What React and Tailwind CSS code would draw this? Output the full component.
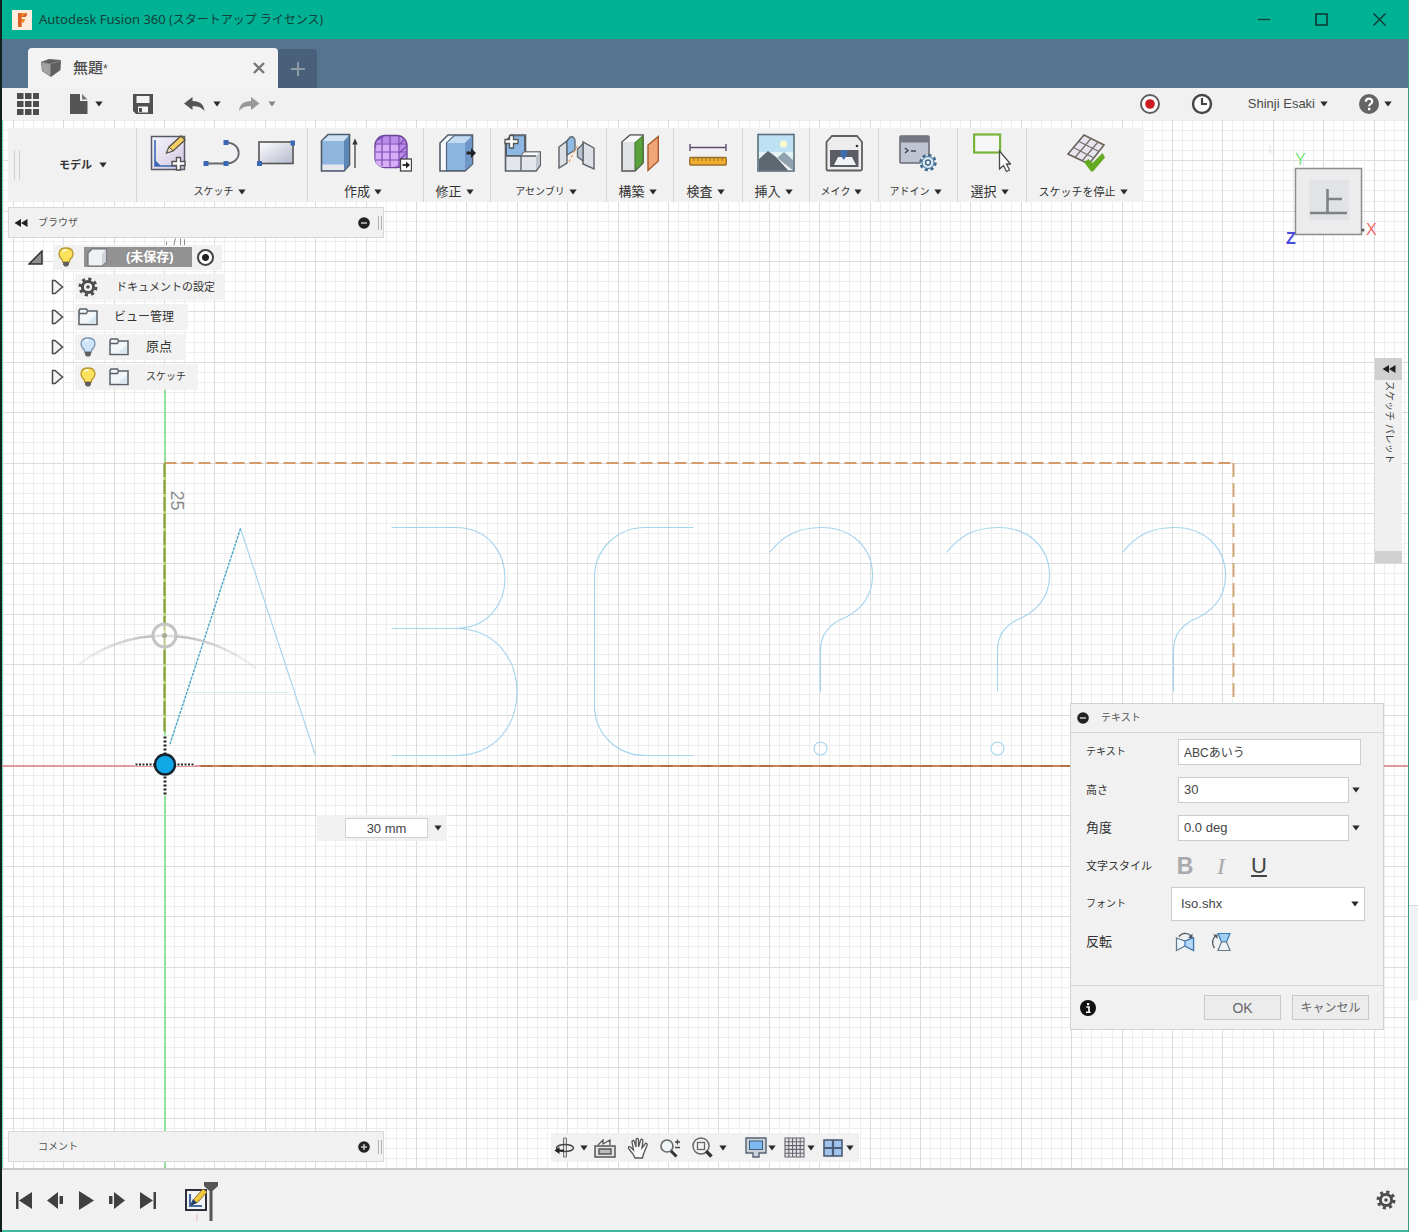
import React from "react";

const GRID = 50.4;
const range = (from, to) => Array.from({ length: to - from + 1 }, (_, i) => from + i);

function Caret({ className = "fill-[#2b2b2b]" }) {
  return (
    <svg className={"h-[6px] w-[8px] shrink-0 " + className} viewBox="0 0 8 6" aria-hidden="true">
      <path d="M0.3 0.4H7.7L4 5.6Z" />
    </svg>
  );
}

function Icon({ w = 24, h = 24, className = "h-6 w-6", children }) {
  return (
    <svg className={"shrink-0 " + className} viewBox={`0 0 ${w} ${h}`} fill="none" aria-hidden="true">
      {children}
    </svg>
  );
}

function Big({ children }) {
  return (
    <Icon w={38} h={40} className="h-[40px] w-[38px]">
      {children}
    </Icon>
  );
}

function TitleBar() {
  return (
    <header className="flex h-[39px] shrink-0 items-center bg-[#00b294] pl-[10px] text-[#12403a]">
      <Icon w={20} h={20} className="h-5 w-5">
        <rect width="20" height="20" fill="#fdeee0" />
        <path d="M6 3H15L13.5 7H9.5V9H13L12 12.5H9.5V17H6Z" fill="#f08a24" />
        <path d="M6 3H9.5V17H6Z" fill="#d8622a" />
        <path d="M9.5 7L15 3V5L13.5 7Z" fill="#e2572b" />
      </Icon>
      <h1 className="ml-[7px] whitespace-pre text-[13px] leading-5">
        Autodesk Fusion 360 <span className="text-[12px]">(スタートアップ ライセンス)</span>
      </h1>
      <div className="ml-auto flex">
        <button aria-label="最小化" className="flex h-[38px] w-[57px] items-center justify-center">
          <Icon w={13} h={13} className="h-[13px] w-[13px]"><path d="M0 6.5H12" stroke="#134b42" strokeWidth="1.4" /></Icon>
        </button>
        <button aria-label="最大化" className="flex h-[38px] w-[57px] items-center justify-center">
          <Icon w={13} h={13} className="h-[13px] w-[13px]"><path d="M1 1H12V12H1Z" stroke="#0c3630" strokeWidth="1.6" /></Icon>
        </button>
        <button aria-label="閉じる" className="flex h-[38px] w-[58px] items-center justify-center">
          <Icon w={13} h={13} className="h-[13px] w-[13px]"><path d="M0.5 0.5L12.5 12.5M12.5 0.5L0.5 12.5" stroke="#0c3630" strokeWidth="1.4" /></Icon>
        </button>
      </div>
    </header>
  );
}

function TabBar() {
  return (
    <div className="flex h-[49px] shrink-0 items-end bg-[#56738f] pl-[26px]">
      <div className="flex h-[40px] w-[250px] items-center rounded-t-[4px] bg-[#f3f3f3] pl-[12px] pr-[9px]">
        <Icon w={22} h={20} className="h-5 w-[22px]">
          <path d="M1 4L9 1L21 2L20.500 12L11 19L2 13Z" fill="#606060" />
          <path d="M1.500 4.500L10.500 6V18L2.500 13Z" fill="#a2a2a2" />
          <path d="M1.500 4L10.500 6L21 2.500" stroke="#848484" />
        </Icon>
        <span className="ml-[11px] text-[15px] font-medium leading-5 text-[#4c4c4c]">無題<span className="text-[12px]">*</span></span>
        <button aria-label="タブを閉じる" className="ml-auto flex h-5 w-5 items-center justify-center">
          <Icon w={12} h={12} className="h-3 w-3"><path d="M1 1L11 11M11 1L1 11" stroke="#777" strokeWidth="2.400" /></Icon>
        </button>
      </div>
      <button aria-label="新しいタブ" className="flex h-[39px] w-[39px] items-center justify-center rounded-t-[4px] bg-[#48607a]">
        <Icon w={14} h={14} className="h-[14px] w-[14px]"><path d="M7 0V14M0 7H14" stroke="#8f99a3" strokeWidth="2" /></Icon>
      </button>
    </div>
  );
}

function QuickBar() {
  return (
    <div className="flex h-[32px] shrink-0 items-center bg-[#f1f1f1] pl-[15px] pr-[16px]">
      <button aria-label="データ パネル">
        <Icon w={22} h={22} className="h-[22px] w-[22px]">
          {[0, 8, 16].map((x) => [0, 8, 16].map((y) => <rect key={x + "-" + y} x={x} y={y} width="6.500" height="6" fill="#4d4d4d" />))}
        </Icon>
      </button>
      <button aria-label="ファイル" className="ml-[31px] flex items-center gap-[7px]">
        <Icon w={18} h={20} className="h-5 w-[18px]">
          <path d="M0 0H10V7H17.500V20H0Z" fill="#555" />
          <path d="M12 0L17.500 5.500H12Z" fill="#777" />
        </Icon>
        <Caret />
      </button>
      <button aria-label="保存" className="ml-[30px]">
        <Icon w={20} h={20} className="h-5 w-5">
          <path d="M0 0H20V20H3L0 17Z" fill="#505050" />
          <rect x="3.500" y="2" width="13" height="7" fill="#f3f3f3" />
          <rect x="5" y="12.500" width="10" height="6" fill="#f3f3f3" />
          <rect x="6" y="14" width="3" height="4" fill="#505050" />
        </Icon>
      </button>
      <button aria-label="元に戻す" className="ml-[31px] flex items-center gap-[8px]">
        <Icon w={21} h={15} className="h-[15px] w-[21px]">
          <path d="M0 6.500L8.500 0V4C16 4 20 7.500 20.500 14C17 10 14 9 8.500 9.200V13Z" fill="#555" />
        </Icon>
        <Caret />
      </button>
      <button aria-label="やり直し" className="ml-[18px] flex items-center gap-[8px]">
        <Icon w={21} h={15} className="h-[15px] w-[21px]">
          <path d="M20.500 6.500L12 0V4C4.500 4 0.500 7.500 0 14C3.500 10 6.500 9 12 9.200V13Z" fill="#999" />
        </Icon>
        <Caret className="fill-[#888]" />
      </button>
      <div className="ml-auto flex items-center">
        <button aria-label="記録">
          <Icon w={22} h={22} className="h-[22px] w-[22px]">
            <circle cx="11" cy="11" r="9" stroke="#5f5f5f" strokeWidth="2" fill="#fff" />
            <circle cx="11" cy="11" r="4.800" fill="#cc1c20" />
          </Icon>
        </button>
        <button aria-label="ジョブ ステータス" className="ml-[30px]">
          <Icon w={22} h={22} className="h-[22px] w-[22px]">
            <circle cx="11" cy="11" r="9" stroke="#454545" strokeWidth="2.400" fill="#fff" />
            <path d="M11 5V11H16" stroke="#454545" strokeWidth="2.200" />
          </Icon>
        </button>
        <button className="ml-[35px] flex items-center gap-[5px] text-[13px] leading-4 text-[#4a4a4a]">Shinji Esaki<Caret /></button>
        <button aria-label="ヘルプ" className="ml-[31px] flex items-center gap-[5px]">
          <Icon w={20} h={20} className="h-5 w-5">
            <circle cx="10" cy="10" r="10" fill="#646464" />
            <path d="M6.800 7.800C6.800 3.600 13.300 3.700 13.200 7.700C13.100 9.700 10.200 9.900 10.200 12.200" stroke="#fff" strokeWidth="2.200" />
            <rect x="9" y="13.800" width="2.400" height="2.400" fill="#fff" />
          </Icon>
          <Caret />
        </button>
      </div>
    </div>
  );
}

const SketchIcon = () => (
  <Big>
    <rect x="2.500" y="3.500" width="33" height="33" fill="url(#lilac)" stroke="#555b66" strokeWidth="1.500" />
    <path d="M6 7V33H32" stroke="#3b6bb3" strokeWidth="1.600" />
    <path d="M6 27V33H12Z" fill="#3b6bb3" />
    <path d="M17.500 20L20 14L32 3L36 7L24 18Z" fill="#f5cf63" stroke="#5b5348" strokeWidth="1.300" />
    <path d="M17.500 20L20 14L24 18Z" fill="#eee0c0" stroke="#5b5348" />
    <path d="M27.500 24.500H31.500V28.500H36V32.500H31.500V37H27.500V32.500H23V28.500H27.500Z" fill="#fff" stroke="#555" strokeWidth="1.400" />
  </Big>
);
const LineIcon = () => (
  <Big>
    <path d="M3 30.500H23C40 30.500 40 9.500 23 9.500" stroke="#66696f" strokeWidth="1.800" />
    <path d="M0.500 28H5.500V33H0.500ZM20.500 28H25.500V33H20.500ZM20.500 7H25.500V12H20.500Z" fill="#3c68b8" />
  </Big>
);
const RectIcon = () => (
  <Big>
    <rect x="2" y="9" width="34" height="21.500" fill="url(#steel)" stroke="#555" strokeWidth="1.600" />
    <path d="M33.500 7.500H38V12.500H33.500ZM0 28H5V33H0Z" fill="#3c68b8" />
  </Big>
);
const ExtrudeIcon = () => (
  <Big>
    <path d="M1.500 8L8 1.500H29.500V32L24 38H1.500Z" fill="#8fb6df" stroke="#4f5b69" strokeWidth="1.600" />
    <path d="M2.500 8L8.500 2.500H28.500L24 8Z" fill="#cfe2f4" />
    <path d="M24 8L29 3V31.500L24 37Z" fill="#5e87b6" />
    <path d="M2.500 31.500H24V37H2.500Z" fill="#e5e8ec" />
    <path d="M35 9V35" stroke="#333" strokeWidth="1.200" />
    <path d="M32.300 11.500L35 5.500L37.700 11.500Z" fill="#333" />
  </Big>
);
const FormIcon = () => (
  <Big>
    <rect x="1" y="2.500" width="32" height="32" rx="10" fill="#bb8ce9" stroke="#6d4597" strokeWidth="1.400" />
    <rect x="1.500" y="10" width="24" height="24" rx="7" fill="#d6adf7" />
    <path d="M8 4V33M16 2.500V34.500M25 3V34M1 11H33M1 19H33M2 27H32M4 7L10 3M25 12L31 6M25 20L33 13M25 27L33 20" stroke="#7d4cb0" strokeWidth="1.200" />
    <rect x="26.500" y="26" width="11" height="12" fill="#fff" stroke="#444" strokeWidth="1.300" />
    <path d="M28.500 32H33" stroke="#222" strokeWidth="1.800" /><path d="M32 28.500L36 32L32 35.500Z" fill="#222" />
  </Big>
);
const PressPullIcon = () => (
  <Big>
    <path d="M2 10L10 2H34.500V31L27 38H2Z" fill="#f5f8fb" stroke="#555e69" strokeWidth="1.600" />
    <path d="M8.500 10L16 2.800H34V31L27 37.500H8.500Z" fill="#8db5e2" stroke="#50647c" strokeWidth="1.200" />
    <path d="M9 10L16.500 3.300H33L27 10Z" fill="#c3daf1" />
    <path d="M27 10L34 3.500V31L27 37Z" fill="#6f97c6" />
    <path d="M28.500 18.500H33V15L38 20L33 25V21.500H28.500Z" fill="#222" />
  </Big>
);
const ComponentIcon = () => (
  <Big>
    <path d="M2.500 9L8 2H22.500V19H37.500V32L33 38H2.500Z" fill="#e3e6ea" stroke="#565d66" strokeWidth="1.600" />
    <path d="M3.500 9.500L8.500 2.800H21.500V18L18 22.500H3.500Z" fill="#8db8e4" stroke="#565d66" />
    <path d="M18.500 23L22.500 19.500H37L33 23Z" fill="#fafafa" />
    <path d="M3 23H18V37.500M18 23H33" stroke="#565d66" strokeWidth="1.300" />
    <path d="M33 23L37 19.500V32L33 37Z" fill="#bfc5cc" />
    <path d="M6.500 2.500H10.500V6.500H15V10.500H10.500V15H6.500V10.500H2V6.500H6.500Z" fill="#fff" stroke="#555" strokeWidth="1.300" />
  </Big>
);
const JointIcon = () => (
  <Big>
    <path d="M2 14L10 8V30L2 35Z" fill="#dcdfe3" stroke="#5d6269" strokeWidth="1.400" />
    <path d="M10 8L13 4C16 3 18 5 18 8V17L10 22Z" fill="#8dbce6" stroke="#5d6269" strokeWidth="1.300" />
    <path d="M37 15L26 9V31L37 36Z" fill="#dcdfe3" stroke="#5d6269" strokeWidth="1.400" />
    <path d="M26 11L20.500 16V24L26 28Z" fill="#b9c3cf" stroke="#5d6269" strokeWidth="1.300" />
    <path d="M12 29L20 13" stroke="#ef9d55" strokeWidth="1.200" strokeDasharray="3 2" />
  </Big>
);
const PlaneIcon = () => (
  <Big>
    <path d="M1 9L9 2H22V30L14 38H1Z" fill="#dfe2e5" stroke="#555" strokeWidth="1.500" />
    <path d="M14 9L22 2.500V30L14 37.500Z" fill="#58a13c" stroke="#3d6b2d" />
    <path d="M2 9L9.500 2.800H21L14 9Z" fill="#fafafa" />
    <path d="M27 12L37.300 3.500V28L27 37.500Z" fill="#f2a578" stroke="#a75a2d" strokeWidth="1.400" />
  </Big>
);
const MeasureIcon = () => (
  <Big>
    <path d="M1 14.500H37M1 11V18M37 11V18" stroke="#5d4a70" strokeWidth="1.400" />
    <rect x="0.700" y="24.500" width="36.600" height="7.500" rx="1" fill="#f1ae2c" stroke="#96702c" strokeWidth="1.300" />
    <path d="M5 25V28M9 25V28M13 25V28M17 25V28M21 25V28M25 25V28M29 25V28M33 25V28" stroke="#96702c" />
  </Big>
);
const ImageIcon = () => (
  <Big>
    <rect x="1" y="1.500" width="36" height="36.500" fill="#bfe1f4" stroke="#5d6e7a" strokeWidth="1.600" />
    <rect x="2" y="19" width="34" height="8" fill="#e3f3f6" />
    <circle cx="26.500" cy="11" r="3.500" fill="#fffbd0" />
    <path d="M20 25L27 19L36 27V37H26Z" fill="#8fa2ad" />
    <path d="M2 26L11 18L19 24L32 37.200H2Z" fill="#5e6670" />
    <path d="M19 24L36 37.200H31Z" fill="#eef0f1" />
  </Big>
);
const MakeIcon = () => (
  <Big>
    <path d="M1.500 9L7 3H32L37 9V36Q37 37.500 35.500 37.500H3Q1.500 37.500 1.500 36Z" fill="#ededed" stroke="#606060" strokeWidth="1.800" />
    <rect x="5" y="17" width="28.500" height="17" fill="#5a5e64" />
    <path d="M9 32L13 24H27L31 32Z" fill="#f0f2f5" />
    <path d="M15.500 17H22V22L18.750 27L15.500 22Z" fill="#3c6eae" />
    <circle cx="32" cy="13" r="1.300" fill="#333" />
  </Big>
);
const AddInIcon = () => (
  <Big>
    <rect x="1" y="3" width="29" height="27" rx="1" fill="#c0c5d2" stroke="#6a6c76" strokeWidth="1.600" />
    <rect x="1" y="3" width="29" height="6.500" fill="#747782" />
    <path d="M6 15L9 17.500L6 20M12 18H17" stroke="#43444b" strokeWidth="1.400" />
    <circle cx="29" cy="29.500" r="7.500" fill="#dbeaf6" stroke="#41698e" strokeWidth="2.500" strokeDasharray="3.200 2.690" />
    <circle cx="29" cy="29.500" r="6" fill="#dbeaf6" stroke="#41698e" />
    <circle cx="29" cy="29.500" r="2.400" fill="#fff" stroke="#41698e" strokeWidth="1.500" />
  </Big>
);
const SelectIcon = () => (
  <Big>
    <rect x="1.100" y="1.500" width="26" height="18" fill="#f7f7f7" stroke="#77b53a" strokeWidth="2.200" />
    <path d="M26.500 18V36L30.500 32.500L33.500 38.500L36.500 37L33.500 31H37.500Z" fill="#fff" stroke="#4b4b4b" strokeWidth="1.300" />
  </Big>
);
const StopSketchIcon = () => (
  <Big>
    <path d="M17 2L37 12L22 31L1 21Z" fill="#e7e6f0" stroke="#6b6259" strokeWidth="1.600" />
    <path d="M12 8.500L32 18.500M6.500 14.500L27 25M24 5.500L8 24.500M31 9L15 28" stroke="#77706d" strokeWidth="1.300" />
    <path d="M17 29L21.500 26L25.500 30L35.500 20L38 24.500L26 38.500H24Z" fill="#64aa22" />
  </Big>
);

const GROUPS = [
  { label: "スケッチ", size: "text-[10px]", width: "w-[171px]", icons: [SketchIcon, LineIcon, RectIcon] },
  { label: "作成", size: "text-[13px]", width: "w-[116px]", icons: [ExtrudeIcon, FormIcon] },
  { label: "修正", size: "text-[13px]", width: "w-[67px]", icons: [PressPullIcon] },
  { label: "アセンブリ", size: "text-[10px]", width: "w-[116px]", icons: [ComponentIcon, JointIcon] },
  { label: "構築", size: "text-[13px]", width: "w-[67px]", icons: [PlaneIcon] },
  { label: "検査", size: "text-[13px]", width: "w-[69px]", icons: [MeasureIcon] },
  { label: "挿入", size: "text-[13px]", width: "w-[67px]", icons: [ImageIcon] },
  { label: "メイク", size: "text-[10px]", width: "w-[69px]", icons: [MakeIcon] },
  { label: "アドイン", size: "text-[10px]", width: "w-[79px]", icons: [AddInIcon] },
  { label: "選択", size: "text-[13px]", width: "w-[69px]", icons: [SelectIcon] },
  { label: "スケッチを停止", size: "text-[11px]", width: "w-[118px]", icons: [StopSketchIcon] },
];

function Ribbon() {
  return (
    <nav aria-label="ツールバー" className="relative ml-[6px] mt-2 flex h-[74px] w-fit bg-[#f1f1f1]">
      <div className="flex w-[128px] items-center">
        <span className="ml-[6px] h-[30px] w-[6px] border-x border-[#cfcfcf]" />
        <button className="ml-[39px] flex items-center gap-[7px] text-[11px] font-bold leading-4 text-[#333]">モデル<Caret /></button>
      </div>
      {GROUPS.map((g) => (
        <div key={g.label} className={"flex flex-col items-center border-l border-[#d6d6d6] pt-[5px] " + g.width}>
          <div className="flex gap-4">
            {g.icons.map((I, i) => (
              <button key={i} aria-label={g.label + " " + (i + 1)}><I /></button>
            ))}
          </div>
          <button className={"mt-[11px] flex items-center gap-[4px] pr-[5px] leading-4 text-[#333] " + g.size}>{g.label}<Caret /></button>
        </div>
      ))}
    </nav>
  );
}

function RoundMark({ plus }) {
  return (
    <Icon w={12} h={12} className="h-3 w-3">
      <circle cx="6" cy="6" r="5.800" fill="#222" />
      <path d={plus ? "M3 6H9M6 3V9" : "M3 6H9"} stroke="#c8c8c8" strokeWidth="1.500" />
    </Icon>
  );
}

function PanelBar({ title, plus }) {
  return (
    <div className="flex h-[31px] w-[376px] items-center border border-[#d8d8d8] bg-[#f1f1f1] pr-[1px]">
      <span className="flex w-[29px] pl-[5px]">
        {!plus && <Icon w={14} h={8} className="h-2 w-[14px]"><path d="M7 0V8L0.500 4ZM13.500 0V8L7 4Z" fill="#222" /></Icon>}
      </span>
      <h2 className="text-[10px] leading-4 text-[#555]">{title}</h2>
      <button aria-label={title + (plus ? "を展開" : "を閉じる")} className="ml-auto"><RoundMark plus={plus} /></button>
      <span className="ml-[8px] h-[14px] w-[4px] border-x border-[#b0b0b0]" />
    </div>
  );
}

const Bulb = ({ on }) => (
  <Icon w={16} h={20} className="h-5 w-4">
    <path d="M8 1C-0.500 1 -0.500 9 4.500 13V15H11.500V13C16.500 9 16.500 1 8 1Z" fill={on ? "#fbe25c" : "#cfe4f8"} stroke={on ? "#b8962e" : "#7895b5"} strokeWidth="1.300" />
    <path d="M5 4.500C6 3 7.500 3 8.500 3.200" stroke="#fff" strokeWidth="1.500" />
    <path d="M5 15H11V17.500L9.500 19.500H6.500L5 17.500Z" fill="#606060" />
  </Icon>
);
const Folder = () => (
  <Icon w={20} h={18} className="h-[18px] w-5">
    <path d="M1 2.500L2 1H8.500L9.500 3H19V16.500H1Z" fill="#f3f6f9" stroke="#596069" strokeWidth="1.500" />
    <path d="M1 5.500H8.500L9.500 3" stroke="#596069" strokeWidth="1.300" />
    <path d="M10 14L18 7V15.500H10Z" fill="#d9e8f1" />
  </Icon>
);
const Gear = ({ className = "h-5 w-5" }) => (
  <Icon w={20} h={20} className={className}>
    <circle cx="10" cy="10" r="8" stroke="#4d4d4d" strokeWidth="3" strokeDasharray="3.140 3.140" />
    <circle cx="10" cy="10" r="5.600" stroke="#4d4d4d" strokeWidth="3" />
    <circle cx="10" cy="10" r="1.800" fill="#4d4d4d" />
  </Icon>
);
const Expand = () => (
  <Icon w={13} h={16} className="h-4 w-[13px]"><path d="M1.500 1.500H4L11.500 8L4 14.500H1.500Z" fill="#f3f3f3" stroke="#4a4a4a" strokeWidth="1.500" /></Icon>
);

const ROWS = [
  { label: "ドキュメントの設定", size: "text-[11px]", icons: [<Gear key="g" />], gap: "ml-[18px]", pad: "pr-[10px]" },
  { label: "ビュー管理", size: "text-[12px]", icons: [<Folder key="f" />], gap: "ml-[16px]", pad: "pr-[14px]" },
  { label: "原点", size: "text-[13px]", icons: [<Bulb key="b" />, <Folder key="f" />], gap: "ml-[17px]", pad: "pr-[14px]" },
  { label: "スケッチ", size: "text-[10px]", icons: [<Bulb key="b" on />, <Folder key="f" />], gap: "ml-[17px]", pad: "pr-[12px]" },
];

function Browser() {
  return (
    <aside className="relative ml-[6px] mt-[5px] w-fit">
      <PanelBar title="ブラウザ" />
      <ul className="mt-[4px] text-[#333]">
        <li className="flex h-[30px] items-center pl-[20px]">
          <button aria-label="折りたたむ"><Icon w={15} h={15} className="h-[15px] w-[15px]"><path d="M1 14L14 1V14Z" fill="#8f8f8f" stroke="#333" strokeWidth="1.500" /></Icon></button>
          <div className="ml-[10px] flex h-[25px] items-center bg-[#f1f1f1] pl-[5px] pr-[8px]">
            <Bulb on />
            <div className="ml-[10px] flex h-[20px] w-[108px] items-center bg-[#929292] pl-[3px]">
              <Icon w={20} h={19} className="h-[19px] w-5">
                <path d="M1 5L5 1H19V14L15 18H1Z" fill="#f0f1f3" stroke="#6a6e74" strokeWidth="1.200" />
                <path d="M15 5.500V17.500L19 14V1.500Z" fill="#cfd4da" />
              </Icon>
              <span className="ml-[19px] text-[13px] font-bold leading-4 text-white">(未保存)</span>
            </div>
            <input type="radio" name="active" defaultChecked aria-label="(未保存) をアクティブにする" className="ml-[5px] h-[17px] w-[17px] appearance-none rounded-full border-2 border-[#444] bg-[radial-gradient(circle,#222_3px,#fff_4px)]" />
          </div>
        </li>
        {ROWS.map((r) => (
          <li key={r.label} className="flex h-[30px] items-center pl-[43px]">
            <button aria-label={r.label + "を展開"}><Expand /></button>
            <div className={"ml-[11px] flex h-[26px] items-center bg-[#f1f1f1]/90 pl-[3px] " + r.pad}>
              <div className="flex items-center gap-[13px]">
                {r.icons.map((icon, i) => (
                  <span key={i} className={r.icons.length > 1 && i === 0 ? "pl-[2px]" : ""}>{icon}</span>
                ))}
              </div>
              <span className={"leading-4 " + r.gap + " " + r.size}>{r.label}</span>
            </div>
          </li>
        ))}
      </ul>
    </aside>
  );
}

function SketchCanvas() {
  return (
    <svg className="absolute inset-0 h-full w-full" fill="none" aria-hidden="true">
      <defs>
        <linearGradient id="lilac" x1="0" y1="0" x2="1" y2="1"><stop offset="0" stopColor="#f4f6fb" /><stop offset="1" stopColor="#d3c6e2" /></linearGradient>
        <linearGradient id="steel" x1="0" y1="0" x2="1" y2="1"><stop offset="0" stopColor="#ffffff" /><stop offset="1" stopColor="#b4b9cc" /></linearGradient>
        <linearGradient id="fade"><stop offset="0" stopColor="#c8c8c8" stopOpacity="0.200" /><stop offset="0.400" stopColor="#c0c0c0" /><stop offset="0.600" stopColor="#c0c0c0" /><stop offset="1" stopColor="#c8c8c8" stopOpacity="0.200" /></linearGradient>
      </defs>
      <g transform="translate(162.500 645.500)">
        <g shapeRendering="crispEdges">
          {range(-17, 200).map((i) => i % 5 !== 0 && <path key={"a" + i} d={`M${(i * GRID) / 5} -700V700`} stroke="#eeeeef" />)}
          {range(-70, 60).map((i) => i % 5 !== 0 && <path key={"b" + i} d={`M-200 ${(i * GRID) / 5}H2000`} stroke="#eeeeef" />)}
          {range(-3, 39).map((i) => <path key={"c" + i} d={`M${i * GRID} -700V700`} stroke="#dadcdd" />)}
          {range(-13, 11).map((i) => <path key={"d" + i} d={`M-200 ${i * GRID}H2000`} stroke="#dadcdd" />)}
          <path d="M-162 -700V700" stroke="#7ddcc4" />
          <path d="M-200 0H2000" stroke="#e39a9a" strokeWidth="2" />
          <path d="M0 -378V700" stroke="#92e29b" strokeWidth="2" />
        </g>
        <path d="M0 -302.400H1069" stroke="#d59a69" strokeWidth="2" strokeDasharray="12 5" />
        <path d="M1069 -302.400V0" stroke="#d5a577" strokeWidth="2" strokeDasharray="14 6" />
        <path d="M0 -302.400V-34" stroke="#b9cf6e" strokeWidth="2" />
        <path d="M0 -302.400V-34" stroke="#8c9f3c" strokeWidth="2" strokeDasharray="14 3" />
        <path d="M36 0.500H1069" stroke="#c98553" strokeWidth="2" />
        <path d="M36 0.500H1069" stroke="#b36f3f" strokeWidth="2" strokeDasharray="12 8" />
        <text transform="translate(6 -275) rotate(90)" fontSize="18" fill="#8c8c8c" fontFamily="Liberation Sans">25</text>
        <path d="M2 -524V-519M11 -527L9 -519M16 -527V-519M20 -526V-520" stroke="#8a8a8a" />
        <g stroke="#a3d4ec" strokeWidth="1.100">
          <path d="M76 -237L151 -10" />
          <path d="M22 -73H125" stroke="#d9eef2" />
          <path d="M227 -238H291C357 -238 357 -137 291 -137M227 -137H291C373 -137 373 -10 291 -10H227" />
          <path d="M529 -238H481C452 -238 430 -216 430 -188V-60C430 -32 452 -10 481 -10H529" />
          {[0, 177, 353].map((x) => (
            <g key={x} transform={`translate(${x} 0)`}>
              <path d="M605 -213C618 -229 632 -238 657 -238C687 -238 708 -218 708 -190C708 -171 698 -157 681 -148C665 -142 656 -132 656 -115V-74" />
              <circle cx="656" cy="-17" r="6.500" />
            </g>
          ))}
        </g>
        <path d="M76 -237L5 -20" stroke="#4ba6c6" strokeWidth="1.400" strokeDasharray="3 1" />
        <path d="M-86 -101C-34 -140 36 -140 92 -97" stroke="url(#fade)" strokeWidth="2.500" />
        <circle cy="-130" r="11.500" stroke="#c4c4c4" strokeWidth="3" fill="#fff" fillOpacity="0.500" />
        <circle cy="-130" r="2.500" fill="#a9ad98" />
        <path d="M-30 -1H30M0 -30V30" stroke="#fff" strokeWidth="3" />
        <path d="M-29 -1H29" stroke="#222" strokeWidth="2" strokeDasharray="2 1.500" />
        <path d="M0.500 -29V29" stroke="#222" strokeWidth="3" strokeDasharray="2 2" />
        <circle cx="0.500" cy="-1" r="10" fill="#12a8e8" stroke="#14222c" strokeWidth="2.400" />
      </g>
    </svg>
  );
}

function ViewCube() {
  return (
    <div className="absolute right-[30px] top-[14px] h-[128px] w-[120px]">
      <svg className="h-full w-full" viewBox="0 0 120 128" fill="none" fontFamily="Liberation Sans" role="img" aria-label="ビュー: 上">
        <path d="M12 11V18H17" stroke="#e0e0e0" />
        <text x="37" y="31" fontSize="16" fill="#7be580">Y</text>
        <rect x="37.500" y="34.500" width="66" height="66" fill="#ececed" stroke="#8d8d8d" strokeWidth="1.500" />
        <rect x="51" y="46" width="40" height="40" fill="#e2e3e6" />
        <path d="M69.500 55V79M69.500 65H84M52 79H89" stroke="#7d8287" strokeWidth="2.600" />
        <text x="28" y="110" fontSize="16" fontWeight="bold" fill="#4b49dc">Z</text>
        <circle cx="105" cy="96" r="1.500" fill="#555" />
        <text x="108" y="101" fontSize="16" fill="#ef6b6b">X</text>
      </svg>
    </div>
  );
}

function Palette() {
  return (
    <aside className="absolute right-[6px] top-[238px] flex h-[205px] w-[27px] flex-col items-center bg-[#f0f0f0]">
      <button aria-label="パレットを開く" className="flex h-[22px] w-full shrink-0 items-center justify-center bg-[#d0d0d0]">
        <Icon w={14} h={8} className="h-2 w-[14px]"><path d="M7 0V8L0.500 4ZM13.500 0V8L7 4Z" fill="#222" /></Icon>
      </button>
      <span className="mt-px text-[10px] leading-4 text-[#444] [text-orientation:sideways] [writing-mode:vertical-rl]">スケッチ パレット</span>
      <span className="mt-auto h-3 w-full bg-[#d0d0d0]" />
    </aside>
  );
}

const field = "h-[26px] border border-[#cccccc] bg-white px-[5px] pb-px text-[#444] outline-none";

function Row({ id, label, size, children }) {
  return (
    <div className="flex h-[38px] items-center">
      <label htmlFor={id} className={"w-[85px] shrink-0 leading-4 text-[#333] " + size}>{label}</label>
      {children}
    </div>
  );
}

function TextDialog() {
  return (
    <section aria-label="テキスト" className="absolute right-[24px] top-[583px] w-[314px] border border-[#d2d2d2] bg-[#f1f1f1]">
      <div className="flex h-[29px] items-center border-b border-[#d6d6d6] pl-[6px]">
        <button aria-label="折りたたむ"><RoundMark /></button>
        <h2 className="ml-[12px] text-[10px] leading-4 text-[#555]">テキスト</h2>
      </div>
      <div className="h-[253px] border-b border-[#d6d6d6] pl-[15px]">
        <Row id="txt" label="テキスト" size="text-[10px]">
          <input id="txt" defaultValue="ABCあいう" className={field + " ml-[7px] w-[183px] text-[12px]"} />
        </Row>
        <Row id="height" label="高さ" size="text-[11px]">
          <input id="height" defaultValue="30" className={field + " ml-[7px] w-[171px] text-[13px]"} />
          <button aria-label="高さの候補" className="ml-[3px]"><Caret /></button>
        </Row>
        <Row id="angle" label="角度" size="text-[13px]">
          <input id="angle" defaultValue="0.0 deg" className={field + " ml-[7px] w-[171px] text-[13px]"} />
          <button aria-label="角度の候補" className="ml-[3px]"><Caret /></button>
        </Row>
        <Row id="bold" label="文字スタイル" size="text-[11px]">
          <button id="bold" aria-label="太字" className="w-[28px] text-[23px] font-bold leading-7 text-[#a9a9ad]">B</button>
          <button aria-label="斜体" className="ml-[8px] w-[28px] font-['Liberation_Serif',serif] text-[24px] italic leading-7 text-[#a9a9ad]">I</button>
          <button aria-label="下線" className="ml-[10px] w-[28px] text-[22px] leading-7 text-[#444] underline decoration-2 underline-offset-2">U</button>
        </Row>
        <Row id="font" label="フォント" size="text-[10px]">
          <div className="relative">
            <select id="font" className="h-[34px] w-[194px] appearance-none border border-[#cccccc] bg-white px-[9px] text-[13px] text-[#444] outline-none">
              <option>Iso.shx</option>
            </select>
            <span className="pointer-events-none absolute inset-y-0 right-[6px] flex items-center"><Caret /></span>
          </div>
        </Row>
        <Row id="fliph" label="反転" size="text-[13px]">
          <button id="fliph" aria-label="左右反転" className="ml-[4px]">
            <Icon w={20} h={20} className="h-5 w-5">
              <path d="M1.500 6L10 9L18.500 6V18.500L10 14L1.500 18.500Z" fill="#eef5fb" stroke="#65798c" strokeWidth="1.300" />
              <path d="M10 9L18.500 6V18.500L10 14Z" fill="#b5d9f6" stroke="#3b79b4" strokeWidth="1.200" />
              <path d="M4 4.500C7 0.500 13 0.500 16 4" stroke="#4c5862" strokeWidth="1.300" /><path d="M17.500 1.500V6H13Z" fill="#4c5862" />
            </Icon>
          </button>
          <button aria-label="上下反転" className="ml-[16px]">
            <Icon w={20} h={20} className="h-5 w-5">
              <path d="M7 1.500H19L15.500 10H10.500Z" fill="#9fd0f5" stroke="#3b79b4" strokeWidth="1.200" />
              <path d="M10.500 10H15.500L19 18.500H7Z" fill="#f2f4f6" stroke="#65798c" strokeWidth="1.200" />
              <path d="M3.500 16C0.500 12 1 7 4.500 4" stroke="#4c5862" strokeWidth="1.300" /><path d="M2 2.500H6.500V7Z" fill="#4c5862" />
            </Icon>
          </button>
        </Row>
      </div>
      <div className="flex h-[43px] items-center pl-[9px] pr-[14px]">
        <Icon w={16} h={16} className="h-4 w-4">
          <circle cx="8" cy="8" r="8" fill="#111" />
          <path d="M6.300 7H9V12M6 12.200H10.500" stroke="#fff" strokeWidth="1.600" /><rect x="7" y="3" width="2.200" height="2.200" fill="#fff" />
        </Icon>
        <button className="ml-auto h-[25px] w-[77px] border border-[#c9c9c9] bg-[#ececec] text-[14px] leading-5 text-[#666]">OK</button>
        <button className="ml-[11px] h-[25px] w-[77px] border border-[#c9c9c9] bg-[#ececec] text-[12px] leading-5 text-[#666]">キャンセル</button>
      </div>
    </section>
  );
}

function NavBar() {
  return (
    <div className="flex h-[29px] w-[308px] items-center bg-[#f1f1f1] pl-[3px] pr-[4px]">
      <button aria-label="オービット" className="flex items-center gap-[5px]">
        <Icon w={21} h={21} className="h-[21px] w-[21px]">
          <path d="M9.500 1H12.500V20H9.500Z" fill="#ddd" stroke="#777" />
          <ellipse cx="11" cy="11" rx="8.500" ry="3.600" stroke="#444" strokeWidth="1.500" />
          <path d="M2 13.500H10" stroke="#222" strokeWidth="1.800" /><path d="M5.500 10L0.500 13.500L5.500 17Z" fill="#222" />
        </Icon>
        <Caret />
      </button>
      <button aria-label="ビュー正面" className="ml-[6px]">
        <Icon w={22} h={20} className="h-5 w-[22px]">
          <path d="M1 8H21V19H1Z" fill="#e4e4e4" stroke="#555" strokeWidth="1.500" />
          <path d="M5 11H17V16H5Z" fill="#bbb" stroke="#555" strokeWidth="1.400" /><path d="M4 7L9 2V6L16 2V7" stroke="#555" strokeWidth="1.300" />
        </Icon>
      </button>
      <button aria-label="パン" className="ml-[11px]">
        <Icon w={22} h={22} className="h-[22px] w-[22px]">
          <path d="M8 21L6 17L1.500 11.500C1 9.500 3 9 4.500 11L6.500 13L5 5C5 3 7 3 7.500 5L9 10V3C9 1 11.500 1 11.500 3V10L13.500 3.500C14 1.500 16 2 15.800 4L15 11L18 7C19 5.500 21 6.500 20 8.500L16.500 17L15.500 21Z" fill="#fafafa" stroke="#555" strokeWidth="1.300" />
        </Icon>
      </button>
      <button aria-label="ズーム" className="ml-[10px]">
        <Icon w={22} h={20} className="h-5 w-[22px]">
          <circle cx="8" cy="8" r="6" stroke="#666" strokeWidth="1.600" fill="#eef4f7" /><path d="M12 13L17.500 18.500" stroke="#333" strokeWidth="3" />
          <path d="M16 4H21M18.500 1.500V6.500M16 9.500H21" stroke="#444" strokeWidth="1.300" />
        </Icon>
      </button>
      <button aria-label="フィット" className="ml-[11px] flex items-center gap-[6px]">
        <Icon w={21} h={21} className="h-[21px] w-[21px]">
          <circle cx="9" cy="9" r="8" stroke="#666" strokeWidth="1.500" fill="#f4f4f4" /><rect x="5.500" y="5.500" width="7" height="7" stroke="#666" strokeWidth="1.300" /><path d="M14 14L19.500 19.500" stroke="#333" strokeWidth="3.400" />
        </Icon>
        <Caret />
      </button>
      <button aria-label="表示設定" className="ml-[18px] flex items-center gap-[1px]">
        <Icon w={22} h={21} className="h-[21px] w-[22px]">
          <path d="M1 1H21V16H14V20H8V16H1Z" fill="#ccd2d9" stroke="#566270" strokeWidth="1.400" /><rect x="4.500" y="4" width="13" height="8.500" fill="#7ebaf1" stroke="#3f5f7d" />
        </Icon>
        <Caret />
      </button>
      <button aria-label="グリッドとスナップ" className="ml-[8px] flex items-center gap-[2px]">
        <Icon w={21} h={21} className="h-[21px] w-[21px]">
          <path d="M1 1H20V20H1ZM4.800 1V20M8.600 1V20M12.400 1V20M16.200 1V20M1 4.800H20M1 8.600H20M1 12.400H20M1 16.200H20" fill="#e6e6ea" stroke="#65656d" strokeWidth="1.100" />
        </Icon>
        <Caret />
      </button>
      <button aria-label="ビューポート" className="ml-[8px] flex items-center gap-[3px]">
        <Icon w={20} h={18} className="h-[18px] w-5">
          <rect x="1" y="1" width="18" height="16" fill="#a1c4ee" stroke="#4d5c75" strokeWidth="1.600" /><path d="M10 1V17M1 9H19" stroke="#4d5c75" strokeWidth="2.200" />
        </Icon>
        <Caret />
      </button>
    </div>
  );
}

function Timeline() {
  const buttons = [
    ["先頭へ", "M0 1H2.500V18H0ZM16 1V18L3 9.500Z"],
    ["前へ", "M11 1V18L0 9.500ZM12.500 5H16V13H12.500Z"],
    ["再生", "M1 0L16 9.500L1 19Z"],
    ["次へ", "M5 1V18L16 9.500ZM0 5H3.500V13H0Z"],
    ["末尾へ", "M13.500 1H16V18H13.500ZM0 1V18L13 9.500Z"],
  ];
  return (
    <footer className="flex h-[64px] shrink-0 items-center border-b-2 border-t-2 border-b-[#3db89c] border-t-[#c9c9c9] bg-[#f1f1f1] pl-[14px] pr-[12px]">
      <div className="flex gap-[15px]">
        {buttons.map(([label, d]) => (
          <button key={label} aria-label={label}>
            <Icon w={16} h={19} className="h-[19px] w-4"><path d={d} fill="#404040" /></Icon>
          </button>
        ))}
      </div>
      <button aria-label="スケッチ1" className="ml-[29px] mt-[6px]">
        <Icon w={36} h={42} className="h-[42px] w-[36px]">
          <rect x="1" y="8" width="20" height="20" fill="#f5f5f5" stroke="#2d2f3a" strokeWidth="2" />
          <path d="M5 12V24H17" stroke="#4769a5" strokeWidth="2.200" />
          <path d="M6 23L9 17L18 7L22 10L13 20Z" fill="#f3c63c" stroke="#8f783c" /><path d="M5 24L8 17L12 21Z" fill="#26406b" />
          <path d="M12 32V39" stroke="#e6b6dc" />
          <path d="M19 0H33V4L27.500 9V39H24.500V9L19 4Z" fill="#555" />
        </Icon>
      </button>
      <button aria-label="設定" className="ml-auto"><Gear /></button>
    </footer>
  );
}

export default function App() {
  return (
    <div className="flex min-h-screen bg-white font-['Liberation_Sans','Noto_Sans_CJK_JP',sans-serif]">
      <div className="w-[2px] shrink-0 bg-[#10201d]" />
      <div className="flex min-w-0 flex-1 flex-col border-r border-[#3a9d86]">
        <div className="font-['Noto_Sans','Noto_Sans_CJK_JP',sans-serif]"><TitleBar /></div>
        <TabBar />
        <QuickBar />
        <main className="relative flex flex-1 flex-col overflow-hidden bg-white">
          <SketchCanvas />
          <Ribbon />
          <Browser />
          <ViewCube />
          <Palette />
          <div className="absolute left-[315px] top-[695px] flex h-[26px] w-[130px] items-center bg-[#f1f1f1] pl-[28px]">
            <input aria-label="高さ" defaultValue="30 mm" className="h-[20px] w-[83px] border border-[#d0d0d0] bg-white text-center text-[13px] text-[#444] outline-none" />
            <button aria-label="単位の候補" className="ml-[6px]"><Caret /></button>
          </div>
          <TextDialog />
          <div className="relative mt-auto grid grid-cols-[1fr_auto_1fr] items-end pb-[6px] pl-[6px] pr-[6px]">
            <PanelBar title="コメント" plus />
            <NavBar />
          </div>
        </main>
        <Timeline />
      </div>
      <div className="flex w-[9px] shrink-0 flex-col justify-end bg-white pb-[231px]">
        <div className="h-[96px] border-t border-[#d5d8da] bg-[#f1f3f4]" />
      </div>
    </div>
  );
}
